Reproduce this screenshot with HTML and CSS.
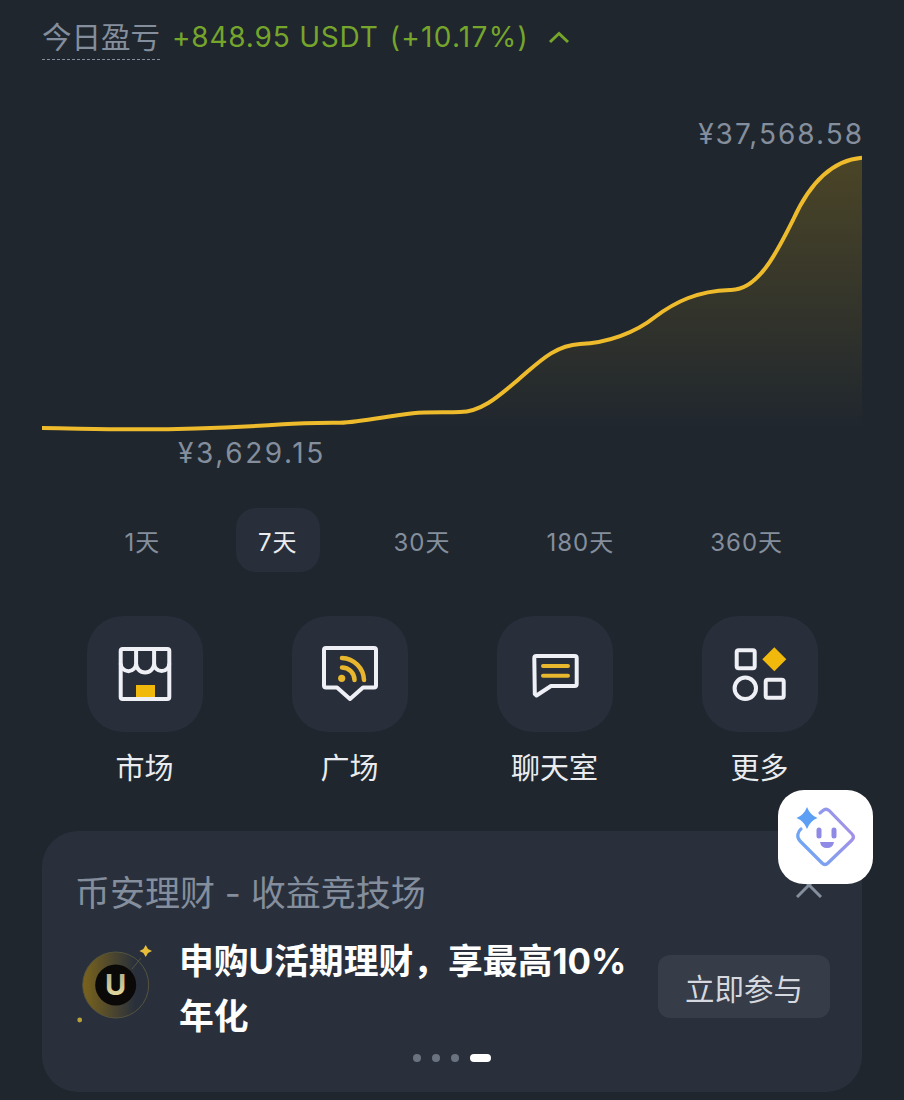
FILE: index.html
```html
<!DOCTYPE html>
<html lang="zh-CN">
<head>
    <meta charset="UTF-8">
    <meta name="viewport" content="width=device-width, initial-scale=1.0">
    <title>今日盈亏</title>
    <link rel="stylesheet" href="styles.css">
</head>
<body>
    <div class="page">
        <div class="pnl-row">
            <span class="pnl-label">今日盈亏</span>
            <span class="pnl-value">+848.95 USDT</span>
            <span class="pnl-value pnl-percent">(+10.17%)</span>
            <svg class="pnl-arrow" width="24" height="14" viewBox="0 0 24 14">
                <path d="M3 12 L12 3.5 L21 12" fill="none" stroke="#76a52c" stroke-width="3"/>
            </svg>
        </div>

        <!-- Chart -->
        <div class="chart">
            <div class="chart-high">¥37,568.58</div>
            <svg class="chart-line" width="820" height="290" viewBox="0 0 820 290">
                <defs>
                    <linearGradient id="areaFill" gradientUnits="userSpaceOnUse" x1="0" y1="8" x2="0" y2="282">
                        <stop offset="0" stop-color="#f0b90b" stop-opacity="0.21"/>
                        <stop offset="1" stop-color="#f0b90b" stop-opacity="0"/>
                    </linearGradient>
                </defs>
                <path fill="url(#areaFill)" d="M0 278 C40 278.5 60 279.5 100 279.3 C150 279.3 190 277.5 241 274.3 C262 273 280 273 298 272.8 C320 272 345 266 371 263.2 C385 262 405 262.5 418 262 C440 262 458 245 477 229 C496 213 512 195.5 538 194 C565 193 593 183 613 167 C633 152 655 141 688 140 C716 141 735 102 751 70 C760 50 781 11 820 7.7 V282 H0 Z"/>
                <path fill="none" stroke="#eebb2c" stroke-width="4" d="M0 278 C40 278.5 60 279.5 100 279.3 C150 279.3 190 277.5 241 274.3 C262 273 280 273 298 272.8 C320 272 345 266 371 263.2 C385 262 405 262.5 418 262 C440 262 458 245 477 229 C496 213 512 195.5 538 194 C565 193 593 183 613 167 C633 152 655 141 688 140 C716 141 735 102 751 70 C760 50 781 11 820 7.7"/>
            </svg>
            <div class="chart-low">¥3,629.15</div>
        </div>

        <div class="ranges">
            <div class="range">1天</div>
            <div class="range active">7天</div>
            <div class="range">30天</div>
            <div class="range">180天</div>
            <div class="range">360天</div>
        </div>

        <!-- Shortcuts -->
        <div class="shortcuts">
            <div class="shortcut">
                <div class="shortcut-icon">
                    <svg width="116" height="116" viewBox="0 0 116 116" fill="none">
                        <rect x="49" y="69" width="19" height="14" fill="#f0b90b"/>
                        <rect x="33.7" y="33" width="48.6" height="50" rx="2" stroke="#eef0f6" stroke-width="4"/>
                        <path d="M33.7 47.5 a7.7 7.7 0 0 0 15.4 0 a9 9 0 0 0 18 0 a7.6 7.6 0 0 0 15.2 0 M49.1 33 V47.5 M67.1 33 V47.5" stroke="#eef0f6" stroke-width="4"/>
                    </svg>
                </div>
                <div class="shortcut-name">市场</div>
            </div>
            <div class="shortcut">
                <div class="shortcut-icon">
                    <svg width="116" height="116" viewBox="0 0 116 116" fill="none">
                        <path d="M34 32 H82 Q84 32 84 34 V69.5 Q84 71.5 82 71.5 H71 L58 83 L45 71.5 H34 Q32 71.5 32 69.5 V34 Q32 32 34 32 Z" stroke="#eef0f6" stroke-width="4" stroke-linejoin="round"/>
                        <circle cx="49.7" cy="62.3" r="3.6" fill="#e8b72e"/>
                        <path d="M50 51.5 A12.5 12.5 0 0 1 62.5 64 M50 42 A23 23 0 0 1 72 64" stroke="#e8b72e" stroke-width="4.5" stroke-linecap="round"/>
                    </svg>
                </div>
                <div class="shortcut-name">广场</div>
            </div>
            <div class="shortcut">
                <div class="shortcut-icon">
                    <svg width="116" height="116" viewBox="0 0 116 116" fill="none">
                        <path d="M37.3 42 Q37.3 40 39.3 40 H77.7 Q79.7 40 79.7 42 V68 Q79.7 70 77.7 70 H54 L39.5 79.5 L37.8 78 Z" stroke="#eef0f6" stroke-width="4" stroke-linejoin="round"/>
                        <path d="M46 50 H71 M46 59.7 H71" stroke="#e8b72e" stroke-width="4" stroke-linecap="round"/>
                    </svg>
                </div>
                <div class="shortcut-name">聊天室</div>
            </div>
            <div class="shortcut">
                <div class="shortcut-icon">
                    <svg width="116" height="116" viewBox="0 0 116 116" fill="none">
                        <rect x="34.7" y="34.3" width="18" height="18" rx="2" stroke="#eef0f6" stroke-width="4"/>
                        <path d="M72.3 31.3 L84.3 43.3 L72.3 55.3 L60.3 43.3 Z" fill="#f0b90b"/>
                        <circle cx="43.3" cy="72.3" r="10.7" stroke="#eef0f6" stroke-width="4"/>
                        <rect x="63.7" y="63.7" width="18" height="18" rx="2" stroke="#eef0f6" stroke-width="4"/>
                    </svg>
                </div>
                <div class="shortcut-name">更多</div>
            </div>
        </div>

        <!-- Promo card -->
        <div class="promo">
            <div class="promo-top">
                <div class="promo-title">币安理财 - 收益竞技场</div>
                <svg class="promo-close" width="26" height="26" viewBox="0 0 26 26">
                    <path d="M1 1 L25 25 M25 1 L1 25" stroke="#848e9c" stroke-width="3"/>
                </svg>
            </div>
            <div class="promo-body">
                <svg class="promo-logo" width="80" height="80" viewBox="0 0 80 80" fill="none">
                    <defs>
                        <linearGradient id="ringFill" x1="0" y1="0" x2="1" y2="0">
                            <stop offset="0" stop-color="#7a631c"/>
                            <stop offset="0.8" stop-color="#7a631c" stop-opacity="0"/>
                        </linearGradient>
                        <linearGradient id="uFill" x1="0" y1="0" x2="0" y2="1">
                            <stop offset="0" stop-color="#a8a68c"/>
                            <stop offset="1" stop-color="#efe2a0"/>
                        </linearGradient>
                    </defs>
                    <circle cx="40.7" cy="40" r="33" fill="url(#ringFill)" stroke="#55543f" stroke-width="1"/>
                    <circle cx="40.7" cy="40" r="20.5" fill="#0a0907"/>
                    <path d="M57 24 L66 13" stroke="#55543f" stroke-width="1"/>
                    <path d="M70.7 0 L73 4 L77 6 L73 8 L70.7 12 L68.4 8 L64.4 6 L68.4 4 Z" fill="#e8bd3a"/>
                    <circle cx="4.7" cy="75" r="2.4" fill="#b5a138"/>
                    <text class="logo-u" x="40.7" y="50" text-anchor="middle" fill="url(#uFill)">U</text>
                </svg>
                <div class="promo-text">申购U活期理财，享最高10%年化</div>
                <div class="promo-btn">立即参与</div>
            </div>
            <div class="dots">
                <span class="dot"></span>
                <span class="dot"></span>
                <span class="dot"></span>
                <span class="dot current"></span>
            </div>
        </div>

        <!-- Floating assistant button -->
        <div class="assistant">
            <svg width="95" height="95" viewBox="0 0 95 95" fill="none">
                <defs>
                    <linearGradient id="faceLine" gradientUnits="userSpaceOnUse" x1="19" y1="60" x2="77" y2="35">
                        <stop offset="0" stop-color="#6aa8f5"/>
                        <stop offset="1" stop-color="#a88fe6"/>
                    </linearGradient>
                </defs>
                <path d="M42 23 L45 20.5 Q48 18 51 20.5 L74 44 Q77 47 74 50 L50 73 Q47 76 44 73 L22 51 Q19 48 20 44 Q20.5 41 23 39" stroke="url(#faceLine)" stroke-width="3.2" stroke-linecap="round"/>
                <path d="M29 17 Q32 25 39.5 28 Q32 31 29 39 Q26 31 18.5 28 Q26 25 29 17 Z" fill="#5d9ff5"/>
                <rect x="38.5" y="37.5" width="5" height="11" rx="2.5" fill="#8f8ae6"/>
                <rect x="53.5" y="37.5" width="5" height="11" rx="2.5" fill="#8f8ae6"/>
                <path d="M42 52 H56 Q55 58 49 58 Q43 58 42 52 Z" fill="#8f8ae6"/>
            </svg>
        </div>
    </div>
</body>
</html>
```
FILE: styles.css
```css
* {
    margin: 0;
    padding: 0;
    box-sizing: border-box;
    font-family: Inter, "Noto Sans CJK SC", sans-serif;
}

body {
    background-color: #1f262e;
}

.page {
    position: relative;
    height: 1100px;
    padding: 0 42px;
    overflow: hidden;
}

.pnl-row {
    display: flex;
    align-items: center;
    height: 74px;
    font-size: 28px;
}

.pnl-label {
    color: #848e9c;
    font-size: 29.5px;
    line-height: 44px;
    border-bottom: 1px dashed #848e9c;
    margin-right: 12px;
}

.pnl-value {
    color: #76a52c;
    letter-spacing: 0.8px;
    margin-right: 11px;
}

.pnl-percent {
    letter-spacing: 1.3px;
    margin-right: 13px;
}

.pnl-arrow {
    margin-left: 5px;
}

.chart {
    position: relative;
    height: 434px;
    padding-top: 76px;
}

.chart-line {
    display: block;
}

.chart-high,
.chart-low {
    position: absolute;
    color: #848e9c;
    font-size: 28px;
    line-height: 36px;
    letter-spacing: 2px;
}

.chart-high {
    right: -2px;
    top: 42px;
}

.chart-low {
    left: 136px;
    top: 361px;
    letter-spacing: 2.6px;
}

.ranges {
    display: flex;
    justify-content: center;
    gap: 52px;
    height: 64px;
    padding-left: 2px;
}

.range {
    display: flex;
    align-items: center;
    justify-content: center;
    min-width: 83px;
    padding: 0 22px;
    font-size: 24px;
    letter-spacing: 1px;
    color: #848e9c;
    border-radius: 20px;
}

.range.active {
    background: #282e3a;
    color: #eaecef;
}

.shortcuts {
    display: grid;
    grid-template-columns: repeat(4, 205px);
    margin-top: 44px;
}

.shortcut {
    display: flex;
    flex-direction: column;
    align-items: center;
}

.shortcut-icon {
    width: 116px;
    height: 116px;
    background: #282e3a;
    border-radius: 36px;
}

.shortcut-icon svg {
    display: block;
}

.shortcut-name {
    margin-top: 17px;
    font-size: 29px;
    line-height: 40px;
    color: #eaecef;
}

.promo {
    height: 261px;
    margin-top: 42px;
    padding: 0 32px 0 33px;
    background: #29303c;
    border-radius: 36px;
}

.promo-top {
    display: flex;
    justify-content: space-between;
    padding-top: 41px;
    padding-right: 8px;
}

.promo-title {
    font-size: 35px;
    line-height: 42px;
    color: #848e9c;
}

.promo-close {
    display: block;
}

.promo-body {
    display: flex;
    align-items: flex-start;
    margin-top: 20px;
}

.promo-logo {
    flex-shrink: 0;
    margin-top: 11px;
    margin-right: 24px;
}

.promo-text {
    width: 465px;
    font-size: 34.8px;
    line-height: 55px;
    font-weight: 700;
    color: #ffffff;
}

.promo-btn {
    display: flex;
    align-items: center;
    justify-content: center;
    flex-shrink: 0;
    width: 172px;
    height: 63px;
    margin-top: 21px;
    margin-left: auto;
    background: #363c48;
    border-radius: 12px;
    font-size: 29.5px;
    color: #d5d8de;
}

.logo-u {
    font-size: 29px;
    font-weight: 700;
}

.dots {
    display: flex;
    justify-content: center;
    align-items: center;
    gap: 11px;
    margin-top: 10px;
    padding-right: 1px;
}

.dot {
    width: 8px;
    height: 8px;
    border-radius: 50%;
    background: #6b7280;
}

.dot.current {
    width: 21px;
    border-radius: 4px;
    background: #ffffff;
}

.assistant {
    position: absolute;
    top: 790px;
    right: 31px;
    width: 95px;
    height: 94px;
    background: #ffffff;
    border-radius: 26px;
}
```
